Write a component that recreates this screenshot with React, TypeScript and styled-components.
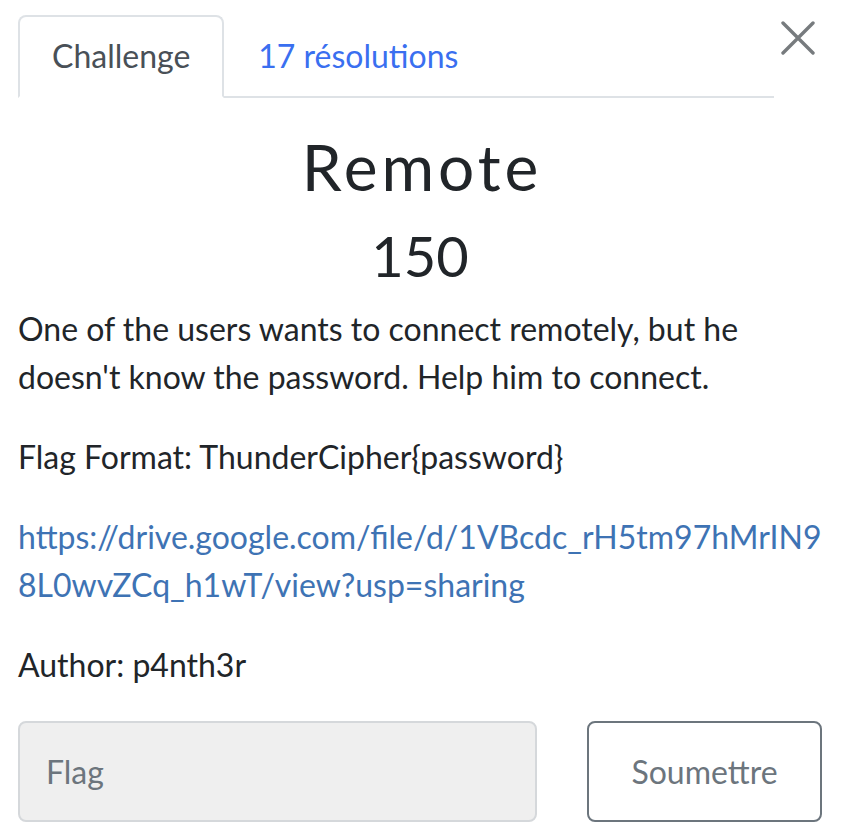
import React from "react";
import styled, { createGlobalStyle } from "styled-components";

const Global = createGlobalStyle`
  html, body { margin: 0; padding: 0; background: #ffffff; }
  body { font-family: Lato, "Noto Sans", "Liberation Sans", sans-serif; color: #212529; }
  * { box-sizing: border-box; }
`;

const Page = styled.div`
  padding: 15px 20px 12px 18px;
  width: 842px;
`;

const Header = styled.div`
  display: flex;
  align-items: flex-start;
`;

const Nav = styled.ul`
  flex: 1;
  display: flex;
  list-style: none;
  margin: 0;
  padding: 0;
  border-bottom: 2px solid #dee2e6;
`;

const TabItem = styled.li`
  margin-bottom: -2px;
`;

const Tab = styled.a<{ $active?: boolean }>`
  display: block;
  padding: 15px 32px 16px;
  font-size: 32px;
  line-height: 48px;
  text-decoration: none;
  border: 2px solid ${(p) => (p.$active ? "#dee2e6" : "transparent")};
  border-bottom-color: ${(p) => (p.$active ? "#ffffff" : "transparent")};
  border-radius: 8px 8px 0 0;
  color: ${(p) => (p.$active ? "#495057" : "#3a6ff0")};
  background: ${(p) => (p.$active ? "#ffffff" : "transparent")};
`;

const Close = styled.button`
  width: 48px;
  height: 48px;
  padding: 0;
  margin: 0;
  border: none;
  background: transparent;
  display: flex;
  align-items: flex-start;
  justify-content: center;
  padding-top: 6px;
  cursor: pointer;
`;

const Body = styled.div`
  padding-top: 31px;
`;

const Title = styled.h2`
  margin: 0 0 16px;
  text-align: center;
  font-size: 64px;
  font-weight: 400;
  line-height: 1.2;
  letter-spacing: 4px;
  text-indent: 4px;
`;

const Value = styled.h3`
  margin: 0 0 16px;
  text-align: center;
  font-size: 56px;
  font-weight: 400;
  line-height: 1.2;
`;

const Para = styled.p<{ $breakAll?: boolean }>`
  margin: 0 0 32px;
  font-size: 32px;
  line-height: 48px;
  word-break: ${(p) => (p.$breakAll ? "break-all" : "normal")};
`;

const Link = styled.a`
  color: #3e73b4;
  text-decoration: none;
`;

const Form = styled.form`
  display: flex;
  gap: 50px;
  margin: 0;
`;

const Input = styled.input`
  flex: 1;
  min-width: 0;
  height: 101px;
  padding: 0 26px;
  font-family: inherit;
  font-size: 32px;
  color: #495057;
  background: #efefef;
  border: 2px solid #d5d8db;
  border-radius: 8px;
  outline: none;
  &::placeholder { color: #6c757d; opacity: 1; }
`;

const Submit = styled.button`
  width: 235px;
  height: 101px;
  font-family: inherit;
  font-size: 32px;
  color: #6c757d;
  background: #ffffff;
  border: 2px solid #6c757d;
  border-radius: 8px;
  cursor: pointer;
`;

export default function App() {
  return (
    <>
      <Global />
      <Page>
        <Header>
          <Nav>
            <TabItem>
              <Tab $active href="#">Challenge</Tab>
            </TabItem>
            <TabItem>
              <Tab href="#">17 résolutions</Tab>
            </TabItem>
          </Nav>
          <Close aria-label="Close">
            <svg width="34" height="34" viewBox="0 0 34 34">
              <path d="M2 2 L32 32 M32 2 L2 32" stroke="#777b7e" strokeWidth="3.4" strokeLinecap="round" fill="none" />
            </svg>
          </Close>
        </Header>
        <Body>
          <Title>Remote</Title>
          <Value>150</Value>
          <Para>
            One of the users wants to connect remotely, but he doesn't know the password. Help him to connect.
          </Para>
          <Para>Flag Format: ThunderCipher{"{password}"}</Para>
          <Para $breakAll>
            <Link href="#">https://drive.google.com/file/d/1VBcdc_rH5tm97hMrIN98L0wvZCq_h1wT/view?usp=sharing</Link>
          </Para>
          <Para>Author: p4nth3r</Para>
          <Form onSubmit={(e) => e.preventDefault()}>
            <Input placeholder="Flag" />
            <Submit type="submit">Soumettre</Submit>
          </Form>
        </Body>
      </Page>
    </>
  );
}
